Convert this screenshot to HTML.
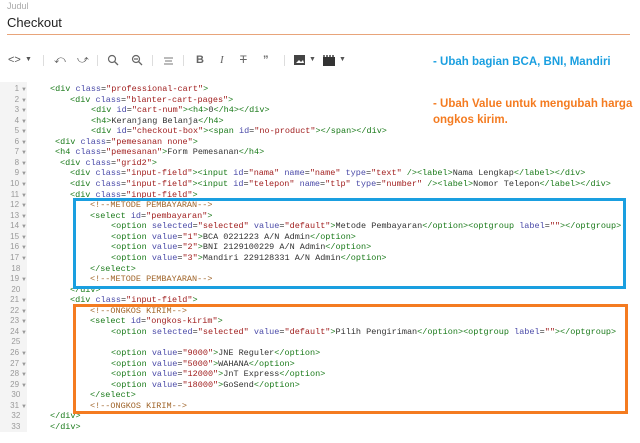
<!DOCTYPE html>
<html><head><meta charset="utf-8"><style>
body{margin:0;width:640px;height:432px;overflow:hidden;background:#fff;position:relative;font-family:"Liberation Sans",sans-serif}
.judul{position:absolute;left:7px;top:1px;font-size:9px;color:#aaa}
.title{position:absolute;left:7px;top:15px;font-size:13px;color:#222}
.ul{position:absolute;left:7px;top:34px;width:623px;height:1px;background:#e8a47a}
.tb{position:absolute;top:53px;font-size:11px;color:#555;line-height:14px}
.sep{position:absolute;top:55px;width:1px;height:11px;background:#ddd}
.gut{position:absolute;left:0;top:82px;width:27px;height:350px;background:#f4f4f4}
.code{position:absolute;left:0;top:84px;font-family:"Liberation Mono",monospace;font-size:8.5px;line-height:10.56px;color:#333;white-space:pre}
.ln{position:absolute;left:0;width:27px;text-align:right;color:#999;font-size:8px;font-family:"Liberation Sans",sans-serif}
.ln i{font-style:normal;font-size:6px;color:#999;margin-left:2px}
.t{color:#1a7a1a}.a{color:#4a4aa8}.s{color:#a12020}.c{color:#a0652a}
.box{position:absolute;box-sizing:border-box;border:3px solid}
.ann{position:absolute;font-weight:bold;font-size:11.5px;line-height:16px}
</style></head><body>
<div class="judul">Judul</div>
<div class="title">Checkout</div>
<div class="ul"></div>
<div class="tb" style="left:8px">&lt;&gt;</div><div class="tb" style="left:25px;font-size:7px">▼</div>
<div class="sep" style="left:43px"></div>
<div class="tb" style="left:54px">⤺</div><div class="tb" style="left:77px">⤻</div>
<div class="sep" style="left:97px"></div>
<svg style="position:absolute;left:107px;top:54px" width="12" height="12"><circle cx="5" cy="5" r="3.5" fill="none" stroke="#666" stroke-width="1.2"/><path d="M7.5 7.5L11 11" stroke="#666" stroke-width="1.3"/></svg>
<svg style="position:absolute;left:131px;top:54px" width="12" height="12"><circle cx="5" cy="5" r="3.5" fill="none" stroke="#666" stroke-width="1.2"/><path d="M7.5 7.5L11 11M3 5h4" stroke="#666" stroke-width="1.3"/></svg>
<div class="sep" style="left:152px"></div>
<svg style="position:absolute;left:163px;top:55px" width="11" height="10"><path d="M1 3h9M2 6h7M1 9h9" stroke="#777" stroke-width="1"/></svg>
<div class="sep" style="left:183px"></div>
<div class="tb" style="left:196px;font-weight:bold;color:#666">B</div>
<div class="tb" style="left:220px;font-style:italic;font-family:'Liberation Serif',serif;color:#666">I</div>
<div class="tb" style="left:240px;text-decoration:line-through;color:#666">T</div>
<div class="tb" style="left:263px;font-weight:bold;color:#666">”</div>
<div class="sep" style="left:284px"></div>
<svg style="position:absolute;left:294px;top:55px" width="12" height="11"><rect width="11" height="10" fill="#444"/><path d="M2 8l3-3 2 2 2-2 1 3z" fill="#fff"/></svg><div class="tb" style="left:309px;font-size:7px">▼</div>
<svg style="position:absolute;left:323px;top:55px" width="13" height="11"><rect y="2" width="12" height="9" fill="#333"/><path d="M1 0v2M4 0v2M7 0v2M10 0v2" stroke="#333" stroke-width="1.4"/></svg><div class="tb" style="left:339px;font-size:7px">▼</div>
<div class="ann" style="left:433px;top:54px;color:#1a9fe0">- Ubah bagian BCA, BNI, Mandiri</div>
<div class="ann" style="left:433px;top:96px;color:#f47b20">- Ubah Value untuk mengubah harga<br>ongkos kirim.</div>
<div class="gut"></div>
<div class="code" id="c">
<div class="ln" style="top:0">1<i>▼</i></div><span style="position:absolute;left:50px;top:0"><span class="t">&lt;div</span> <span class="a">class</span>=<span class="s">"professional-cart"</span><span class="t">&gt;</span></span>
<div class="ln" style="top:10.56px">2<i>▼</i></div><span style="position:absolute;left:70px;top:10.56px"><span class="t">&lt;div</span> <span class="a">class</span>=<span class="s">"blanter-cart-pages"</span><span class="t">&gt;</span></span>
<div class="ln" style="top:21.12px">3<i>▼</i></div><span style="position:absolute;left:91px;top:21.12px"><span class="t">&lt;div</span> <span class="a">id</span>=<span class="s">"cart-num"</span><span class="t">&gt;&lt;h4&gt;</span>0<span class="t">&lt;/h4&gt;&lt;/div&gt;</span></span>
<div class="ln" style="top:31.68px">4<i>▼</i></div><span style="position:absolute;left:91px;top:31.68px"><span class="t">&lt;h4&gt;</span>Keranjang Belanja<span class="t">&lt;/h4&gt;</span></span>
<div class="ln" style="top:42.24px">5<i>▼</i></div><span style="position:absolute;left:91px;top:42.24px"><span class="t">&lt;div</span> <span class="a">id</span>=<span class="s">"checkout-box"</span><span class="t">&gt;&lt;span</span> <span class="a">id</span>=<span class="s">"no-product"</span><span class="t">&gt;&lt;/span&gt;&lt;/div&gt;</span></span>
<div class="ln" style="top:52.8px">6<i>▼</i></div><span style="position:absolute;left:55px;top:52.8px"><span class="t">&lt;div</span> <span class="a">class</span>=<span class="s">"pemesanan none"</span><span class="t">&gt;</span></span>
<div class="ln" style="top:63.36px">7<i>▼</i></div><span style="position:absolute;left:55px;top:63.36px"><span class="t">&lt;h4</span> <span class="a">class</span>=<span class="s">"pemesanan"</span><span class="t">&gt;</span>Form Pemesanan<span class="t">&lt;/h4&gt;</span></span>
<div class="ln" style="top:73.92px">8<i>▼</i></div><span style="position:absolute;left:60px;top:73.92px"><span class="t">&lt;div</span> <span class="a">class</span>=<span class="s">"grid2"</span><span class="t">&gt;</span></span>
<div class="ln" style="top:84.48px">9<i>▼</i></div><span style="position:absolute;left:70px;top:84.48px"><span class="t">&lt;div</span> <span class="a">class</span>=<span class="s">"input-field"</span><span class="t">&gt;&lt;input</span> <span class="a">id</span>=<span class="s">"nama"</span> <span class="a">name</span>=<span class="s">"name"</span> <span class="a">type</span>=<span class="s">"text"</span> <span class="t">/&gt;&lt;label&gt;</span>Nama Lengkap<span class="t">&lt;/label&gt;&lt;/div&gt;</span></span>
<div class="ln" style="top:95.04px">10<i>▼</i></div><span style="position:absolute;left:70px;top:95.04px"><span class="t">&lt;div</span> <span class="a">class</span>=<span class="s">"input-field"</span><span class="t">&gt;&lt;input</span> <span class="a">id</span>=<span class="s">"telepon"</span> <span class="a">name</span>=<span class="s">"tlp"</span> <span class="a">type</span>=<span class="s">"number"</span> <span class="t">/&gt;&lt;label&gt;</span>Nomor Telepon<span class="t">&lt;/label&gt;&lt;/div&gt;</span></span>
<div class="ln" style="top:105.6px">11<i>▼</i></div><span style="position:absolute;left:70px;top:105.6px"><span class="t">&lt;div</span> <span class="a">class</span>=<span class="s">"input-field"</span><span class="t">&gt;</span></span>
<div class="ln" style="top:116.16px">12<i>▼</i></div><span style="position:absolute;left:90px;top:116.16px" class="c">&lt;!--METODE PEMBAYARAN--&gt;</span>
<div class="ln" style="top:126.72px">13<i>▼</i></div><span style="position:absolute;left:90px;top:126.72px"><span class="t">&lt;select</span> <span class="a">id</span>=<span class="s">"pembayaran"</span><span class="t">&gt;</span></span>
<div class="ln" style="top:137.28px">14<i>▼</i></div><span style="position:absolute;left:111px;top:137.28px"><span class="t">&lt;option</span> <span class="a">selected</span>=<span class="s">"selected"</span> <span class="a">value</span>=<span class="s">"default"</span><span class="t">&gt;</span>Metode Pembayaran<span class="t">&lt;/option&gt;&lt;optgroup</span> <span class="a">label</span>=<span class="s">""</span><span class="t">&gt;&lt;/optgroup&gt;</span></span>
<div class="ln" style="top:147.84px">15<i>▼</i></div><span style="position:absolute;left:111px;top:147.84px"><span class="t">&lt;option</span> <span class="a">value</span>=<span class="s">"1"</span><span class="t">&gt;</span>BCA 0221223 A/N Admin<span class="t">&lt;/option&gt;</span></span>
<div class="ln" style="top:158.4px">16<i>▼</i></div><span style="position:absolute;left:111px;top:158.4px"><span class="t">&lt;option</span> <span class="a">value</span>=<span class="s">"2"</span><span class="t">&gt;</span>BNI 2129100229 A/N Admin<span class="t">&lt;/option&gt;</span></span>
<div class="ln" style="top:168.96px">17<i>▼</i></div><span style="position:absolute;left:111px;top:168.96px"><span class="t">&lt;option</span> <span class="a">value</span>=<span class="s">"3"</span><span class="t">&gt;</span>Mandiri 229128331 A/N Admin<span class="t">&lt;/option&gt;</span></span>
<div class="ln" style="top:179.52px">18&nbsp;&nbsp;&nbsp;</div><span style="position:absolute;left:90px;top:179.52px"><span class="t">&lt;/select&gt;</span></span>
<div class="ln" style="top:190.08px">19<i>▼</i></div><span style="position:absolute;left:90px;top:190.08px" class="c">&lt;!--METODE PEMBAYARAN--&gt;</span>
<div class="ln" style="top:200.64px">20&nbsp;&nbsp;&nbsp;</div><span style="position:absolute;left:70px;top:200.64px"><span class="t">&lt;/div&gt;</span></span>
<div class="ln" style="top:211.2px">21<i>▼</i></div><span style="position:absolute;left:70px;top:211.2px"><span class="t">&lt;div</span> <span class="a">class</span>=<span class="s">"input-field"</span><span class="t">&gt;</span></span>
<div class="ln" style="top:221.76px">22<i>▼</i></div><span style="position:absolute;left:90px;top:221.76px" class="c">&lt;!--ONGKOS KIRIM--&gt;</span>
<div class="ln" style="top:232.32px">23<i>▼</i></div><span style="position:absolute;left:90px;top:232.32px"><span class="t">&lt;select</span> <span class="a">id</span>=<span class="s">"ongkos-kirim"</span><span class="t">&gt;</span></span>
<div class="ln" style="top:242.88px">24<i>▼</i></div><span style="position:absolute;left:111px;top:242.88px"><span class="t">&lt;option</span> <span class="a">selected</span>=<span class="s">"selected"</span> <span class="a">value</span>=<span class="s">"default"</span><span class="t">&gt;</span>Pilih Pengiriman<span class="t">&lt;/option&gt;&lt;optgroup</span> <span class="a">label</span>=<span class="s">""</span><span class="t">&gt;&lt;/optgroup&gt;</span></span>
<div class="ln" style="top:253.44px">25&nbsp;&nbsp;&nbsp;</div>
<div class="ln" style="top:264px">26<i>▼</i></div><span style="position:absolute;left:111px;top:264px"><span class="t">&lt;option</span> <span class="a">value</span>=<span class="s">"9000"</span><span class="t">&gt;</span>JNE Reguler<span class="t">&lt;/option&gt;</span></span>
<div class="ln" style="top:274.56px">27<i>▼</i></div><span style="position:absolute;left:111px;top:274.56px"><span class="t">&lt;option</span> <span class="a">value</span>=<span class="s">"5000"</span><span class="t">&gt;</span>WAHANA<span class="t">&lt;/option&gt;</span></span>
<div class="ln" style="top:285.12px">28<i>▼</i></div><span style="position:absolute;left:111px;top:285.12px"><span class="t">&lt;option</span> <span class="a">value</span>=<span class="s">"12000"</span><span class="t">&gt;</span>JnT Express<span class="t">&lt;/option&gt;</span></span>
<div class="ln" style="top:295.68px">29<i>▼</i></div><span style="position:absolute;left:111px;top:295.68px"><span class="t">&lt;option</span> <span class="a">value</span>=<span class="s">"18000"</span><span class="t">&gt;</span>GoSend<span class="t">&lt;/option&gt;</span></span>
<div class="ln" style="top:306.24px">30&nbsp;&nbsp;&nbsp;</div><span style="position:absolute;left:90px;top:306.24px"><span class="t">&lt;/select&gt;</span></span>
<div class="ln" style="top:316.8px">31<i>▼</i></div><span style="position:absolute;left:90px;top:316.8px" class="c">&lt;!--ONGKOS KIRIM--&gt;</span>
<div class="ln" style="top:327.36px">32&nbsp;&nbsp;&nbsp;</div><span style="position:absolute;left:50px;top:327.36px"><span class="t">&lt;/div&gt;</span></span>
<div class="ln" style="top:337.92px">33&nbsp;&nbsp;&nbsp;</div><span style="position:absolute;left:50px;top:337.92px"><span class="t">&lt;/div&gt;</span></span>
</div>
<div class="box" style="left:73px;top:198px;width:553px;height:91px;border-color:#1a9fe0"></div>
<div class="box" style="left:73px;top:304px;width:555px;height:110px;border-color:#f47b20"></div>
</body></html>
